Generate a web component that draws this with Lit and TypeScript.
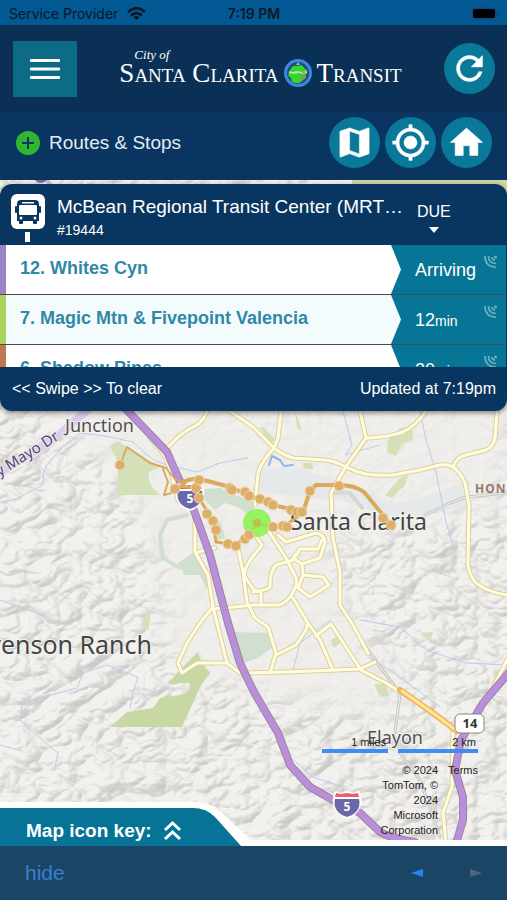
import { LitElement, html, css, svg } from "lit";
import { customElement } from "lit/decorators.js";

const ICONS = {
  refresh:
    "M17.65 6.35C16.2 4.9 14.21 4 12 4c-4.42 0-7.99 3.58-7.99 8s3.57 8 7.99 8c3.73 0 6.84-2.55 7.73-6h-2.08c-.82 2.33-3.04 4-5.65 4-3.31 0-6-2.69-6-6s2.69-6 6-6c1.66 0 3.14.69 4.22 1.78L13 11h7V4l-2.35 2.35z",
  map: "M20.5 3l-.16.03L15 5.1 9 3 3.36 4.9c-.21.07-.36.25-.36.48V20.5c0 .28.22.5.5.5l.16-.03L9 18.9l6 2.1 5.64-1.9c.21-.07.36-.25.36-.48V3.5c0-.28-.22-.5-.5-.5zM15 19l-6-2.11V5l6 2.11V19z",
  locate:
    "M12 8c-2.21 0-4 1.79-4 4s1.79 4 4 4 4-1.79 4-4-1.79-4-4-4zm8.94 3c-.46-4.17-3.77-7.48-7.94-7.94V1h-2v2.06C6.83 3.52 3.52 6.83 3.06 11H1v2h2.06c.46 4.17 3.77 7.48 7.94 7.94V23h2v-2.06c4.17-.46 7.48-3.77 7.94-7.94H23v-2h-2.06zM12 19c-3.87 0-7-3.13-7-7s3.13-7 7-7 7 3.13 7 7-3.13 7-7 7z",
  home: "M10 20v-6h4v6h5v-8h3L12 3 2 12h3v8z",
};

const icon = (d: string) =>
  html`<svg class="icon" viewBox="0 0 24 24" aria-hidden="true"><path d=${d} stroke="#fff" stroke-width=".3" /></svg>`;

/* ---------- map geometry ---------- */

const ROADS = [
  "M230 411L253 427L274 448Q283 455 293 458L325 460Q335 461 346 467Q356 472 366 474Q380 476 393 475L420 470L440 465Q448 464 453 467Q461 473 465 483L469 505L468 565Q470 576 475 582Q486 592 507 595",
  "M453 467Q456 459 462 456L486 450Q494 446 495 438L497 411",
  "M360 411L366 438L345 468L331 493L333 538L340 572V605L353 625L368 653",
  "M426 411Q416 426 403 432Q385 438 366 438",
  "M281 411L278 438L274 448Q260 463 258 474L255 505",
  "M207 411Q204 420 197 425Q182 432 173 442L168 447",
  "M150 438L163 453L170 468L178 500",
  "M195 515V552L208 575L213 607L200 623L187 643L178 663L182 673L197 663L227 663L240 673L286 672L360 669L375 662",
  "M213 607L227 663",
  "M238 548L243 572L247 602L255 618L268 627L276 653L270 673",
  "M213 609L254 605H280Q290 600 293 592Q298 584 296 578L286 558L268 530",
  "M253 592Q268 590 270 587Q270 570 276 565L293 560L298 553",
  "M278 535L286 542L316 533Q325 535 325 542L320 558L302 564L293 558L300 549H318L322 540",
  "M302 564L303 575L323 577L329 585L310 597L298 588L303 575",
  "M293 598L308 623L320 640L333 670",
  "M276 655L296 645L306 630L308 623",
  "M316 636L331 624L361 670L386 683L400 692",
  "M198 552L215 548",
  "M254 555Q242 570 245 577L254 590L261 592L261 605",
  "M453 733L452 787L443 813L446 842",
  "M507 660L492 690",
  "M255 535L262 545L254 555",
];

const STREAMS = [
  "M0 502Q20 500 27 493L43 485Q42 472 47 465L60 450L80 433L105 436L133 442L147 455Q155 462 167 465L197 472L220 463L248 458",
  "M0 600L20 607L43 615",
  "M0 745L23 751M55 767L58 753L40 738L20 720L22 703L77 688L83 673L107 665L138 677L133 693L130 708",
  "M360 620L400 627L426 650L466 663L507 665",
  "M330 620L300 643L293 670",
  "M290 757L313 777L343 787",
  "M368 657L393 672L440 707",
  "M420 411L426 440L436 472L446 522L455 552",
  "M343 411L352 445L345 455L380 445",
];

const STOPS = [
  [120, 465], [175, 489], [196, 488], [199, 480], [199, 498], [207, 514], [213, 521], [216, 530],
  [228, 544], [236, 546], [245, 539], [249, 535], [230, 488], [232, 490], [245, 492], [249, 496],
  [260, 499], [268, 502], [273, 505], [291, 510], [297, 512], [302, 512], [273, 527], [283, 526],
  [287, 527], [310, 491], [339, 486], [383, 518], [391, 525],
];

const shield = (x: number, y: number) => svg`
  <g transform="translate(${x} ${y})">
    <path d="M-12 -13L-6 -11L0 -13L6 -11L12 -13Q16 -4 13 4Q9 12 0 15Q-9 12 -13 4Q-16 -4 -12 -13Z" fill="#fff" />
    <path d="M-11 -11L-6 -10L0 -11L6 -10L11 -11L12 -7H-12Z" fill="#e8606a" />
    <path d="M-12 -5H12Q14 2 9 8Q5 12 0 13Q-5 12 -9 8Q-14 2 -12 -5Z" fill="#6a68a8" />
    <text class="shield-no" x="0" y="7">5</text>
  </g>`;

@customElement("transit-map")
export class TransitMap extends LitElement {
  static styles = css`
    :host { display: block; }
    svg { display: block; width: 100%; height: 100%; }
    text { font-family: "Noto Sans", "Open Sans", sans-serif; }
    .line { fill: none; stroke-linejoin: round; stroke-linecap: round; }
    .city { font-size: 23px; fill: #444; stroke: #f4f3f0; stroke-width: 2px; paint-order: stroke; }
    .ranch { font-size: 25px; }
    .town { font-size: 18px; fill: #505050; stroke: #f4f3f0; stroke-width: 2px; paint-order: stroke; }
    .road-name { font-size: 15px; fill: #55466a; stroke: #eee8f4; stroke-width: 2px; paint-order: stroke; }
    .hood { font-size: 12px; font-weight: 700; letter-spacing: 1px; fill: #94786a; }
    .shield-no { font-size: 12px; font-weight: 700; fill: #fff; text-anchor: middle; }
    .route-no { font-size: 13px; font-weight: 700; fill: #333; text-anchor: middle; }
    .end { text-anchor: end; }
  `;

  render() {
    return html`<svg viewBox="0 180 507 660" preserveAspectRatio="xMidYMid slice" role="img" aria-label="Map of Santa Clarita">
      <defs>
        <filter id="relief" x="0" y="0" width="100%" height="100%" color-interpolation-filters="sRGB">
          <feTurbulence type="turbulence" baseFrequency="0.024 0.034" numOctaves="3" seed="5" result="n" />
          <feDiffuseLighting in="n" surfaceScale="13" diffuseConstant="1.14" lighting-color="#fffffa">
            <feDistantLight azimuth="225" elevation="60" />
          </feDiffuseLighting>
        </filter>
        <filter id="soft" x="-20%" y="-20%" width="140%" height="140%"><feGaussianBlur stdDeviation="14" /></filter>
        <mask id="hills" maskUnits="userSpaceOnUse" x="0" y="180" width="507" height="662">
          <rect y="180" width="507" height="662" fill="#fff" />
          <path d="M40 411L120 480L160 570L170 660L270 700L390 720L410 690L345 610L330 530L420 525L507 500V400H40Z" fill="#000" opacity=".85" filter="url(#soft)" />
        </mask>
      </defs>
      <rect y="180" width="507" height="662" fill="#f0efec" />
      <g mask="url(#hills)"><rect y="180" width="507" height="662" filter="url(#relief)" opacity=".15" /></g>

      <path d="M255 470L300 468L350 485L400 505L470 480V505L400 520L340 500L255 492Z" fill="#e4e7ea" opacity=".8" />
      <g fill="#d3e0b8">
        <path d="M110 446L117 441L127 447L160 467L149 472Q147 485 160 495H118V462Z" />
        <path d="M110 727L127 712L153 708L160 698L180 695Q191 692 190 683Q180 682 172 685L168 683L187 663L198 652L202 663L210 673L200 687L193 703L182 727Z" fill="#c8d8a4" />
        <path d="M388 440L400 428L412 427L413 440L402 444L396 456L387 452Z" />
        <path d="M385 495L400 478L408 475L405 485L392 498Z" />
        <path d="M259 427L264 427L275 440L271 443ZM302 463H312L313 469H305ZM144 614L151 613L148 630L142 628ZM331 640L337 636L341 642L334 648ZM374 684H386L389 696L380 697ZM421 633L433 632L432 637H424ZM295 411L302 430L297 428Z" />
      </g>
      <g fill="#d0dfd0">
        <path d="M203 489L220 488L232 494L254 502V520L240 508L225 503L215 510L205 500Z" />
        <path d="M232 632L270 633L273 647L258 658L240 664L232 650Z" />
        <path d="M178 563L195 552L204 570L212 590L206 588L200 575L185 575ZM205 508L222 525L225 538L218 540Z" />
      </g>
      <path class="line" d="M187 515L167 520L160 535L163 558L180 568" stroke="#d0dfd0" stroke-width="4" />
      <path class="line" d="M269 465L272 456L280 460L284 466L293 465" stroke="#8fb4ee" stroke-width="2" />
      ${STREAMS.map((d) => svg`<path class="line" d=${d} stroke="#b9cdec" stroke-width="1" />`)}

      <path class="line" d="M507 493L466 497L450 503L425 515M331 493L350 493L362 508M368 650L400 694L395 733M400 753L420 780L440 837" stroke="#c6c5c4" stroke-width="3" />
      <path class="line" d="M507 493L466 497L450 503L425 515M331 493L350 493L362 508M368 650L400 694L395 733M400 753L420 780L440 837" stroke="#f3f2f0" stroke-width="1" />

      ${ROADS.map((d) => svg`<path class="line" d=${d} stroke="#ddd19a" stroke-width="5" />`)}
      ${ROADS.map((d) => svg`<path class="line" d=${d} stroke="#fffce0" stroke-width="3" />`)}
      <path class="line" d="M400 690L433 713L457 731" stroke="#f0b25a" stroke-width="6" />
      <path class="line" d="M402 691L433 713L457 731" stroke="#ffe69a" stroke-width="3" />

      <path class="line" d="M90 408L55 438L-4 475" stroke="#dccdea" stroke-width="8" />
      <path class="line" d="M122 405L167 452L178 477L192 505L210 555L228 623L240 663L254 692L278 733L290 765L310 787L333 800L360 813L380 832Q390 838 415 842M511 670L483 703L461 740L455 770L463 797V820L456 844" stroke="#9a86a6" stroke-width="8" />
      <path class="line" d="M122 405L167 452L178 477L192 505L210 555L228 623L240 663L254 692L278 733L290 765L310 787L333 800L360 813L380 832Q390 838 415 842M511 670L483 703L461 740L455 770L463 797V820L456 844" stroke="#b98fd9" stroke-width="6" />
      <path class="line" d="M47 180L52 187" stroke="#d3b5dd" stroke-width="4" />
      <circle cx="41" cy="176" r="7" fill="#7b68ae" />
      <path d="M352 180H507V200Q470 184 352 184Z" fill="#cbd6a4" />

      ${shield(190, 496)} ${shield(347, 804)}
      <rect x="455" y="714" width="29" height="19" rx="5" fill="#fff" stroke="#8b8580" stroke-width="1" />
      <text class="route-no" x="470" y="728">14</text>

      <text class="town" x="65" y="432">Junction</text>
      <text class="city" x="290" y="530">Santa Clarita</text>
      <text class="city ranch end" x="152" y="654">Stevenson Ranch</text>
      <text class="town" x="367" y="744">Elayon</text>
      <text class="hood" x="475" y="493">HONBY</text>
      <text class="road-name end" transform="translate(60 439) rotate(-32)">Henry Mayo Dr</text>

      <g class="line" stroke="#dba95c">
        <path d="M120 465L127 447L150 463L166 468L174 478L184 484M163 469L168 482L164 495L175 492" stroke-width="2" />
        <path d="M182 483Q190 478 200 479L230 487L248 495L273 505L303 512L310 491L316 485L339 485Q354 485 364 492L383 515" stroke-width="4" />
        <path d="M178 486L196 488L199 498L213 521L216 542L236 545L258 524L283 527L303 513" stroke-width="3" />
      </g>
      <circle cx="257" cy="523" r="14" fill="#8bf24e" fill-opacity=".88" />
      <circle cx="257" cy="523" r="4" fill="#c3bb55" />
      ${STOPS.map(([x, y]) => svg`<circle cx=${x} cy=${y} r="5" fill="#dcae68" stroke="#efd6ae" stroke-width="1" />`)}
    </svg>`;
  }
}

interface Departure {
  name: string;
  due: string;
  unit?: string;
  tone: string;
}

const DEPARTURES: Departure[] = [
  { name: "12. Whites Cyn", due: "Arriving", tone: "purple" },
  { name: "7. Magic Mtn & Fivepoint Valencia", due: "12", unit: "min", tone: "green" },
  { name: "6. Shadow Pines", due: "20", unit: "min", tone: "brown" },
];

@customElement("departure-card")
export class DepartureCard extends LitElement {
  static styles = css`
    :host { display: block; color: #fff; }
    * { box-sizing: border-box; }
    .card { background: #083660; border-radius: 12px; overflow: hidden; box-shadow: 0 2px 5px rgba(0, 0, 0, 0.45); }
    .head { display: flex; align-items: flex-start; height: 61px; padding: 10px 0 0 10px; }
    .sign { width: 36px; height: 50px; flex: none; }
    .stop { flex: 1; min-width: 0; padding-left: 11px; }
    h2 { margin: 0; font-size: 19px; font-weight: 400; line-height: 26px; white-space: nowrap; overflow: hidden; }
    .code { margin: 0; font-size: 14px; line-height: 20px; }
    .due-head { width: 90px; flex: none; font-size: 16px; line-height: 20px; padding-top: 8px; }
    .due-head svg { display: block; width: 10px; height: 6px; margin: 5px 0 0 12px; }
    ul { list-style: none; margin: 0; padding: 0; height: 122px; overflow: hidden; }
    li { display: flex; height: 50px; margin-right: 1px; background: #077595; border-bottom: 1px solid #454b50; }
    .bar { width: 6px; flex: none; }
    .purple { background: #9b82c4; }
    .green { background: #abd35c; }
    .brown { background: #bd784e; }
    .name {
      flex: 1; min-width: 0; padding: 0 0 3px 14px; display: flex; align-items: center; background: #fff;
      clip-path: polygon(0 0, calc(100% - 10px) 0, 100% 50%, calc(100% - 10px) 100%, 0 100%);
      color: #2f88a6; font-size: 18px; font-weight: 700; text-decoration: none; white-space: nowrap;
    }
    li:nth-child(even) .name { background: #f4fbfc; }
    .due { width: 105px; flex: none; display: flex; justify-content: space-between; padding: 0 9px 0 14px; font-size: 18px; line-height: 50px; }
    .unit { font-size: 14px; }
    .live { width: 13px; height: 13px; margin-top: 10px; }
    .foot { display: flex; justify-content: space-between; padding: 0 11px 0 12px; font-size: 16px; line-height: 44px; }
  `;

  render() {
    return html`<section class="card">
      <div class="head">
        <svg class="sign" viewBox="0 0 36 50" aria-hidden="true">
          <rect x="1" y="0" width="34" height="35" rx="6" fill="#fff" />
          <rect x="15" y="38" width="5" height="10" fill="#fff" />
          <path d="M11 6H25Q29 6 29 10V27H27V29Q27 30 26 30H24Q23 30 23 29V27H13V29Q13 30 12 30H10Q9 30 9 29V27H7V10Q7 6 11 6Z" fill="#083660" />
          <rect x="5" y="12" width="2" height="7" rx="1" fill="#083660" /><rect x="29" y="12" width="2" height="7" rx="1" fill="#083660" />
          <rect x="12" y="8" width="12" height="1.500" fill="#fff" />
          <rect x="9" y="11" width="18" height="10" rx="1" fill="#fff" />
          <circle cx="11" cy="24" r="1.500" fill="#fff" /><circle cx="25" cy="24" r="1.500" fill="#fff" />
        </svg>
        <div class="stop">
          <h2>McBean Regional Transit Center (MRT…</h2>
          <p class="code">#19444</p>
        </div>
        <div class="due-head">DUE<svg viewBox="0 0 10 6" aria-hidden="true"><path d="M0 0H10L5 6Z" fill="#fff" /></svg></div>
      </div>
      <ul>
        ${DEPARTURES.map(
          (d) => html`<li>
            <span class="bar ${d.tone}"></span>
            <a class="name" href="#">${d.name}</a>
            <span class="due"><span>${d.due}${d.unit ? html`<span class="unit">${d.unit}</span>` : ""}</span>
              <svg class="live" viewBox="0 0 13 13" aria-hidden="true">
                <g fill="none" stroke="#8fc0d0" stroke-width="1.700" opacity=".75">
                  <path d="M1 1Q1 12 12 12M4.500 1Q4.500 8.500 12 8.500M8 2Q8 5 11 5" />
                </g>
                <circle cx="11.500" cy="2" r="1.500" fill="#8fc0d0" opacity=".75" />
              </svg></span>
          </li>`,
        )}
      </ul>
      <div class="foot"><span>&lt;&lt; Swipe &gt;&gt; To clear</span><span>Updated at 7:19pm</span></div>
    </section>`;
  }
}

@customElement("app-root")
export class AppRoot extends LitElement {
  static styles = css`
    :host {
      display: flex; flex-direction: column; min-height: 100vh; background: #1b4564;
      font-family: "Liberation Sans", Arial, Helvetica, sans-serif; color: #fff;
    }
    * { box-sizing: border-box; }
    button { border: 0; padding: 0; margin: 0; font: inherit; color: inherit; background: none; cursor: pointer; }
    .status {
      display: grid; grid-template-columns: 1fr auto 1fr; align-items: center; height: 25px; padding: 2px 8px 0 9px;
      background: #025994; color: #0a1826; font: 14px/20px Inter, "Liberation Sans", sans-serif;
    }
    .carrier { display: flex; align-items: center; gap: 9px; }
    .wifi { width: 19px; height: 13px; }
    .time { font-weight: 600; }
    .battery { width: 28px; height: 13px; justify-self: end; }
    .brand {
      display: grid; grid-template-columns: 64px 1fr 51px; align-items: center; height: 87px;
      padding: 0 12px 0 13px; background: #0b3055;
    }
    .menu { display: flex; align-items: center; justify-content: center; height: 56px; background: #0d6b86; }
    .menu svg { width: 30px; height: 22px; }
    .logo { justify-self: center; font-family: "Liberation Serif", "Times New Roman", serif; white-space: nowrap; padding-bottom: 5px; }
    .city-of { display: block; font-size: 13px; font-style: italic; line-height: 14px; padding-left: 15px; }
    .wordmark { display: flex; align-items: center; gap: 5px; font-size: 27px; line-height: 22px; font-variant: small-caps; }
    .globe { width: 28px; height: 28px; margin: -3px 0; }
    .round {
      display: flex; align-items: center; justify-content: center; width: 51px; height: 51px; border-radius: 50%; background: #0a7899;
    }
    .icon { width: 39px; height: 39px; fill: #fff; }
    .tools { display: flex; align-items: center; gap: 5px; height: 68px; padding: 0 15px 7px 16px; background: #093560; }
    .routes { display: flex; align-items: center; gap: 9px; margin-right: auto; font-size: 19px; color: #e3edf5; }
    .plus { width: 24px; height: 24px; }
    .stage { position: relative; flex: 1; display: flex; flex-direction: column; min-height: 640px; background: #efeeea; overflow: hidden; }
    .map { position: absolute; inset: 0 0 6px; }
    .card { position: relative; margin-top: 4px; }
    .below { position: relative; z-index: 1; display: flex; align-items: flex-end; justify-content: space-between; margin-top: auto; }
    .key {
      position: relative; width: 251px; height: 44px; flex: none; margin-bottom: -6px; padding: 14px 0 0 26px;
      display: flex; gap: 11px; font-size: 19px; font-weight: 700; line-height: 30px;
    }
    .key-shape { position: absolute; left: 0; top: 0; width: 251px; height: 44px; }
    .key-label { position: relative; }
    .chevrons { position: relative; width: 19px; height: 21px; margin-top: 4px; }
    .credits { padding: 0 29px 2px 0; color: #222; font-size: 11px; line-height: 15px; }
    .scales { display: flex; gap: 10px; }
    .scale { height: 18px; text-align: right; padding-right: 2px; border-bottom: 4px solid #3d8df2; }
    .miles { width: 66px; }
    .km { width: 80px; }
    .legal { display: flex; justify-content: flex-end; gap: 10px; margin-top: 10px; text-align: right; }
    .legal span { width: 62px; }
    .legal a { color: inherit; text-decoration: none; }
    .strip { position: relative; height: 6px; background: #fff; }
    .bar { display: flex; align-items: center; height: 54px; padding: 0 25px; background: #1b4564; }
    .hide { margin-right: auto; font-size: 21px; color: #3a7fd0; }
    .nav { display: flex; gap: 47px; }
    .nav button { display: flex; }
    .nav svg { width: 12px; height: 8px; }
  `;

  render() {
    return html`
      <div class="status">
        <span class="carrier">Service Provider
          <svg class="wifi" viewBox="0 0 19 13" aria-hidden="true">
            <g fill="none" stroke="#0a1826" stroke-width="2.600"><path d="M1 5Q9.500 -2.500 18 5M4 8.400Q9.500 3.800 15 8.400" /></g>
            <path d="M6.500 10.300Q9.500 7.800 12.500 10.300L9.500 13Z" fill="#0a1826" />
          </svg></span>
        <span class="time">7:19 PM</span>
        <svg class="battery" viewBox="0 0 28 13" aria-hidden="true">
          <rect x="0.500" y="0.500" width="25" height="12" rx="4" fill="#0a4a7c" />
          <rect x="2" y="2" width="22" height="9" rx="2" fill="#000" /><rect x="26" y="4" width="2" height="5" rx="1" fill="#0a4a7c" />
        </svg>
      </div>
      <header class="brand">
        <button class="menu" aria-label="Menu">
          <svg viewBox="0 0 30 22" aria-hidden="true"><path d="M1 2.500H29M1 11H29M1 19.500H29" stroke="#fff" stroke-width="2.800" stroke-linecap="round" /></svg>
        </button>
        <div class="logo">
          <span class="city-of">City of</span>
          <span class="wordmark">Santa Clarita
            <svg class="globe" viewBox="0 0 28 28" aria-hidden="true">
              <circle cx="14" cy="14" r="12.500" fill="#1d4f78" stroke="#3f86df" stroke-width="3" />
              <path d="M7 10Q8 6 13 7Q19 5 20 9Q25 11 22 16Q23 20 19 20Q17 25 12 24Q7 24 7 19Q3 17 5 13Z" fill="#35d62c" />
              <path d="M5 12L9 13L13 12L18 13L23 12V14L20 15L15 14L10 15L5 14Z" fill="#b5e3a8" />
              <path d="M17 16L22 15L21 20L18 22Z" fill="#7d9a5a" />
              <path d="M18 14L20 12L22 15Z" fill="#c98a6a" />
              <path d="M12 6L14 3L16 6Z" fill="#8fb6d8" />
            </svg>
            Transit</span>
        </div>
        <button class="round" aria-label="Refresh">${icon(ICONS.refresh)}</button>
      </header>
      <nav class="tools">
        <button class="routes">
          <svg class="plus" viewBox="0 0 24 24" aria-hidden="true"><circle cx="12" cy="12" r="12" fill="#2fb734" /><path d="M12 6V18M6 12H18" stroke="#093560" stroke-width="2" /></svg>
          Routes &amp; Stops
        </button>
        <button class="round" aria-label="Map">${icon(ICONS.map)}</button>
        <button class="round" aria-label="My location">${icon(ICONS.locate)}</button>
        <button class="round" aria-label="Home">${icon(ICONS.home)}</button>
      </nav>
      <main class="stage">
        <transit-map class="map"></transit-map>
        <departure-card class="card"></departure-card>
        <div class="below">
          <button class="key">
            <svg class="key-shape" viewBox="0 0 251 44" aria-hidden="true">
              <path d="M0 0H195Q211 0 221 10L251 38V44H0Z" fill="#fff" />
              <path d="M0 6H193Q206 6 215 15L241 44H0Z" fill="#077396" />
            </svg>
            <span class="key-label">Map icon key:</span>
            <svg class="chevrons" viewBox="0 0 19 21" aria-hidden="true"><path d="M2 10L9.500 3L17 10M2 19L9.500 12L17 19" fill="none" stroke="#fff" stroke-width="3" /></svg>
          </button>
          <div class="credits">
            <div class="scales"><div class="scale miles">1 miles</div><div class="scale km">2 km</div></div>
            <div class="legal"><span>© 2024 TomTom, © 2024 Microsoft Corporation</span><a href="#">Terms</a></div>
          </div>
        </div>
        <div class="strip"></div>
      </main>
      <footer class="bar">
        <button class="hide">hide</button>
        <div class="nav">
          <button aria-label="Previous"><svg viewBox="0 0 12 8" aria-hidden="true"><path d="M12 0V8L0 4Z" fill="#2586ee" /></svg></button>
          <button aria-label="Next"><svg viewBox="0 0 12 8" aria-hidden="true"><path d="M0 0V8L12 4Z" fill="#4c6578" /></svg></button>
        </div>
      </footer>
    `;
  }
}
